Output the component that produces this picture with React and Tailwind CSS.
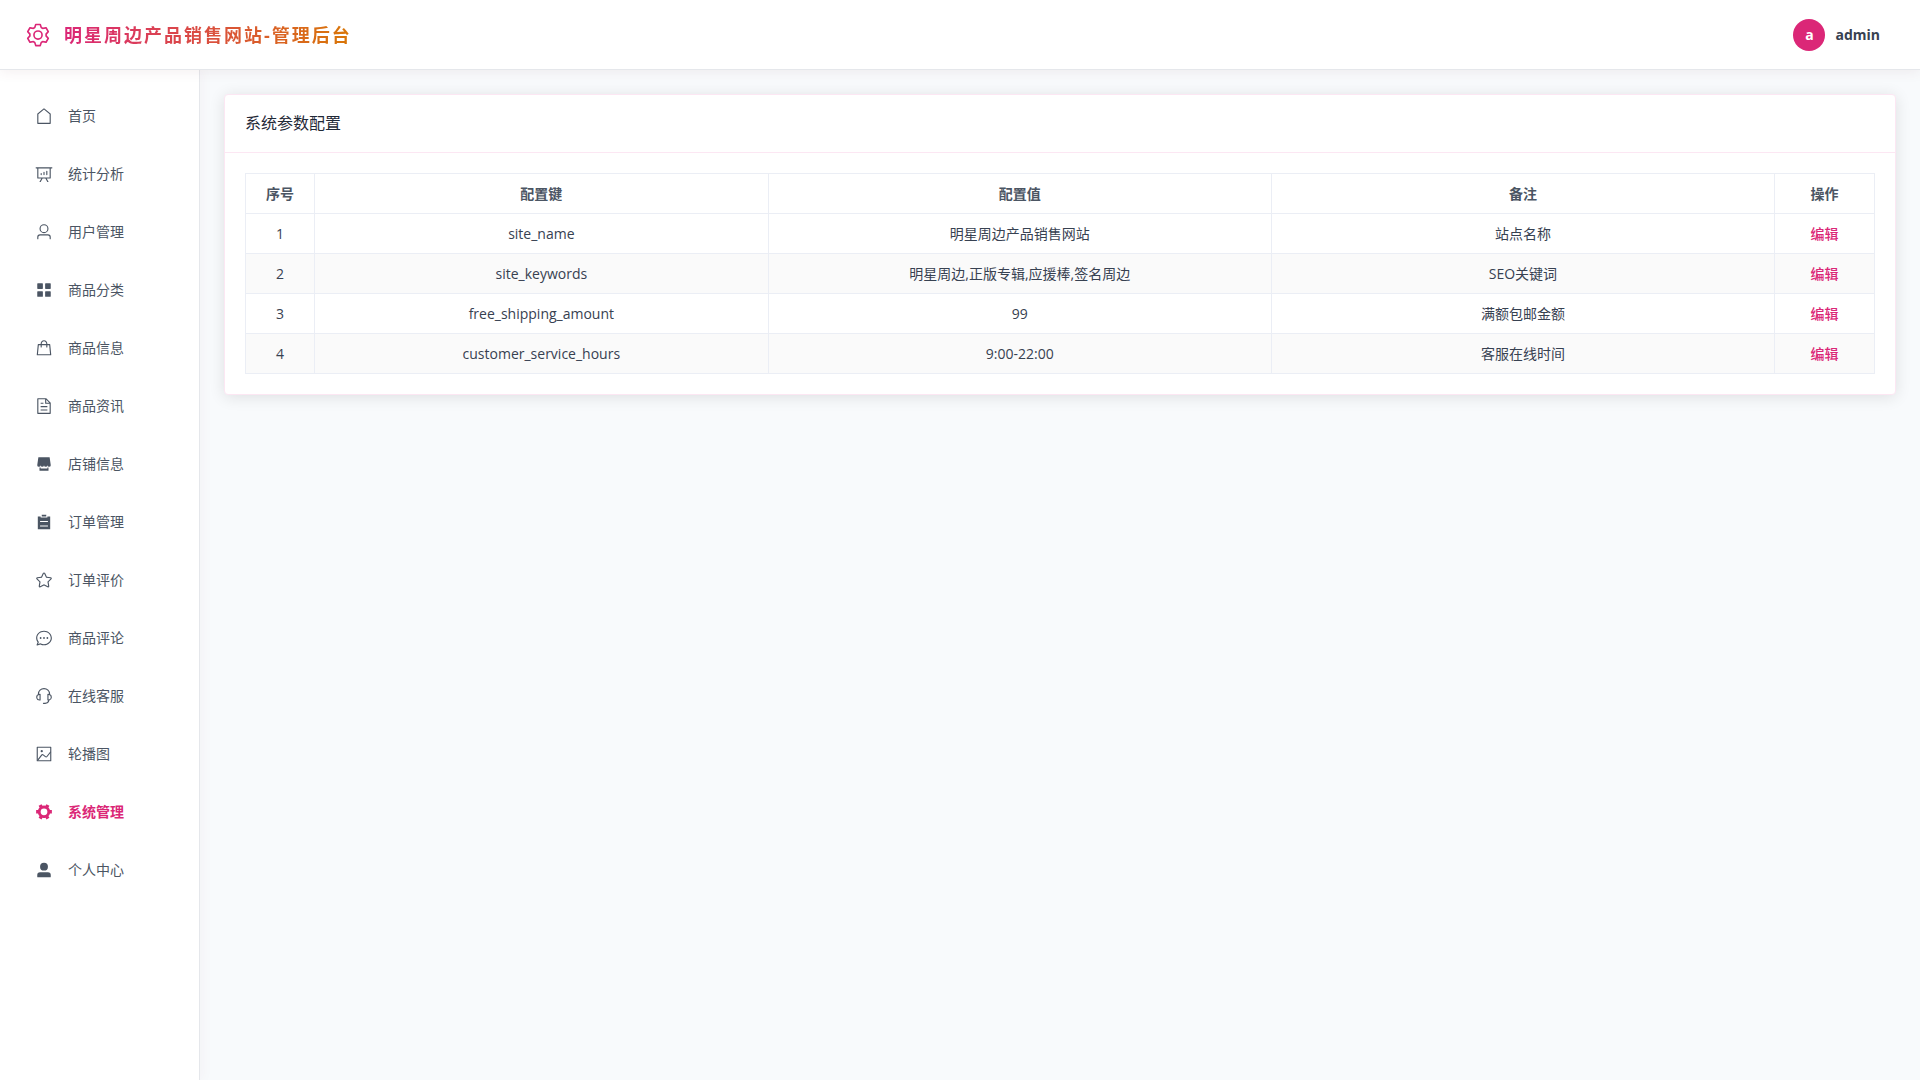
const ICONS = {
  house: ['M192 413.952V896h640V413.952L512 147.328zM139.52 374.4l352-293.312a32 32 0 0 1 40.96 0l352 293.312A32 32 0 0 1 896 398.976V928a32 32 0 0 1-32 32H160a32 32 0 0 1-32-32V398.976a32 32 0 0 1 11.52-24.576'],
  analysis: ['m665.216 768 110.848 192h-73.856L591.36 768H433.024L322.176 960H248.32l110.848-192H160a32 32 0 0 1-32-32V192H64a32 32 0 0 1 0-64h896a32 32 0 1 1 0 64h-64v544a32 32 0 0 1-32 32zM832 192H192v512h640zM352 448a32 32 0 0 1 32 32v64a32 32 0 0 1-64 0v-64a32 32 0 0 1 32-32m160-64a32 32 0 0 1 32 32v128a32 32 0 0 1-64 0V416a32 32 0 0 1 32-32m160-64a32 32 0 0 1 32 32v192a32 32 0 1 1-64 0V352a32 32 0 0 1 32-32'],
  user: ['M512 512a192 192 0 1 0 0-384 192 192 0 0 0 0 384m0 64a256 256 0 1 1 0-512 256 256 0 0 1 0 512m320 320v-96a96 96 0 0 0-96-96H288a96 96 0 0 0-96 96v96a32 32 0 1 1-64 0v-96a160 160 0 0 1 160-160h448a160 160 0 0 1 160 160v96a32 32 0 1 1-64 0'],
  menu: ['M160 448a32 32 0 0 1-32-32V160.064a32 32 0 0 1 32-32h256a32 32 0 0 1 32 32V416a32 32 0 0 1-32 32zm448 0a32 32 0 0 1-32-32V160.064a32 32 0 0 1 32-32h255.936a32 32 0 0 1 32 32V416a32 32 0 0 1-32 32zM160 896a32 32 0 0 1-32-32V608a32 32 0 0 1 32-32h256a32 32 0 0 1 32 32v256a32 32 0 0 1-32 32zm448 0a32 32 0 0 1-32-32V608a32 32 0 0 1 32-32h255.936a32 32 0 0 1 32 32v256a32 32 0 0 1-32 32z'],
  goods: ['M320 288v-22.336C320 154.688 405.504 64 512 64s192 90.688 192 201.664v22.4h131.072a32 32 0 0 1 31.808 28.8l57.6 576a32 32 0 0 1-31.808 35.2H131.328a32 32 0 0 1-31.808-35.2l57.6-576a32 32 0 0 1 31.808-28.8H320zm64 0h256v-22.336C640 189.248 582.272 128 512 128s-128 61.248-128 137.664v22.4zm-64 64H217.92l-51.2 512h690.56l-51.264-512H704v96a32 32 0 1 1-64 0v-96H384v96a32 32 0 0 1-64 0z'],
  document: ['M832 384H576V128H192v768h640zm-26.496-64L640 154.496V320zM160 64h480l256 256v608a32 32 0 0 1-32 32H160a32 32 0 0 1-32-32V96a32 32 0 0 1 32-32m160 448h384v64H320zm0-192h160v64H320zm0 384h384v64H320z'],
  shop: ['M704 704h64v192H256V704h64v64h384zm188.544-152.192C894.528 559.616 896 567.616 896 576a96 96 0 1 1-192 0 96 96 0 1 1-192 0 96 96 0 1 1-192 0 96 96 0 1 1-192 0c0-8.384 1.408-16.384 3.392-24.192L192 128h640z'],
  list: ['M704 192h160v736H160V192h160v64h384zM288 512h448v-64H288zm0 256h448v-64H288zm96-576V96h256v96z'],
  star: ['m512 747.84 228.16 119.936a6.4 6.4 0 0 0 9.28-6.72l-43.52-254.08 184.512-179.904a6.4 6.4 0 0 0-3.52-10.88l-255.104-37.12L517.76 147.904a6.4 6.4 0 0 0-11.52 0L392.192 379.072l-255.104 37.12a6.4 6.4 0 0 0-3.52 10.88L318.08 606.976l-43.584 254.08a6.4 6.4 0 0 0 9.28 6.72zM313.6 924.48a70.4 70.4 0 0 1-102.144-74.24l37.888-220.928L88.96 472.96A70.4 70.4 0 0 1 128 352.896l221.76-32.256 99.2-200.96a70.4 70.4 0 0 1 126.208 0l99.2 200.96 221.824 32.256a70.4 70.4 0 0 1 39.04 120.064L774.72 629.376l37.888 220.928a70.4 70.4 0 0 1-102.144 74.24L512 820.096l-198.4 104.32z'],
  chat: ['m174.72 855.68 135.296-45.12 23.68 11.84C388.096 849.536 448.576 864 512 864c211.84 0 384-166.784 384-352S723.84 160 512 160 128 326.784 128 512c0 69.12 24.96 139.264 70.848 199.232l22.08 28.8-46.272 115.584zm-45.248 82.56A32 32 0 0 1 89.6 896l58.368-145.92C94.72 680.32 64 596.864 64 512 64 299.904 256 96 512 96s448 203.904 448 416-192 416-448 416a461.056 461.056 0 0 1-206.912-48.384l-175.616 58.56z', 'M512 563.2a51.2 51.2 0 1 1 0-102.4 51.2 51.2 0 0 1 0 102.4m192 0a51.2 51.2 0 1 1 0-102.4 51.2 51.2 0 0 1 0 102.4m-384 0a51.2 51.2 0 1 1 0-102.4 51.2 51.2 0 0 1 0 102.4'],
  service: ['M864 409.6a192 192 0 0 1-37.888 349.44A256.064 256.064 0 0 1 576 960h-96a32 32 0 1 1 0-64h96a192.064 192.064 0 0 0 181.12-128H736a32 32 0 0 1-32-32V416a32 32 0 0 1 32-32h32c10.368 0 20.544.832 30.528 2.432a288 288 0 0 0-573.056 0A193.235 193.235 0 0 1 256 384h32a32 32 0 0 1 32 32v320a32 32 0 0 1-32 32h-32a192 192 0 0 1-96-358.4 352 352 0 0 1 704 0M256 448a128 128 0 1 0 0 256zm640 128a128 128 0 0 0-128-128v256a128 128 0 0 0 128-128'],
  picture: ['M160 160v704h704V160zm-32-64h768a32 32 0 0 1 32 32v768a32 32 0 0 1-32 32H128a32 32 0 0 1-32-32V128a32 32 0 0 1 32-32', 'M384 288q64 0 64 64t-64 64q-64 0-64-64t64-64M185.408 876.992l-50.816-38.912L350.72 556.032a96 96 0 0 1 134.592-17.856l1.856 1.472 122.88 99.136a32 32 0 0 0 44.992-4.864l216-269.888 49.92 39.936-215.808 269.824-.256.32a96 96 0 0 1-135.04 14.464l-122.88-99.072-.64-.512a32 32 0 0 0-44.8 5.952z'],
  tools: ['M764.416 254.72a351.68 351.68 0 0 1 86.336 149.184H960v192.064H850.752a351.68 351.68 0 0 1-86.336 149.312l54.72 94.72-166.272 96-54.592-94.72a352.64 352.64 0 0 1-172.48 0L371.136 936l-166.272-96 54.72-94.72a351.68 351.68 0 0 1-86.336-149.312H64v-192h109.248a351.68 351.68 0 0 1 86.336-149.312L204.8 160l166.208-96h.192l54.656 94.592a352.64 352.64 0 0 1 172.48 0L652.8 64h.128L819.2 160l-54.72 94.72zM704 499.968a192 192 0 1 0-384 0 192 192 0 0 0 384 0'],
  userFilled: ['M288 320a224 224 0 1 0 448 0 224 224 0 1 0-448 0m544 608H160a32 32 0 0 1-32-32v-96a160 160 0 0 1 160-160h448a160 160 0 0 1 160 160v96a32 32 0 0 1-32 32z'],
  setting: ['M600.704 64a32 32 0 0 1 30.464 22.208l35.2 109.376c14.784 7.232 28.928 15.36 42.432 24.512l112.384-24.192a32 32 0 0 1 34.432 15.36L944.32 364.8a32 32 0 0 1-4.032 37.504l-77.12 85.12a357.12 357.12 0 0 1 0 49.024l77.12 85.248a32 32 0 0 1 4.032 37.504l-88.704 153.6a32 32 0 0 1-34.432 15.296L708.8 803.904c-13.44 9.088-27.648 17.28-42.368 24.512l-35.264 109.376A32 32 0 0 1 600.704 960H423.296a32 32 0 0 1-30.464-22.208L357.696 828.48a351.616 351.616 0 0 1-42.56-24.64l-112.32 24.256a32 32 0 0 1-34.432-15.36L79.68 659.2a32 32 0 0 1 4.032-37.504l77.12-85.248a357.12 357.12 0 0 1 0-48.896l-77.12-85.248A32 32 0 0 1 79.68 364.8l88.704-153.6a32 32 0 0 1 34.432-15.296l112.32 24.256c13.568-9.152 27.776-17.408 42.56-24.64l35.2-109.312A32 32 0 0 1 423.232 64H600.64zm-23.424 64H446.72l-36.352 113.088-24.512 11.968a294.113 294.113 0 0 0-34.816 20.096l-22.656 15.36-116.224-25.088-65.28 113.152 79.68 88.192-1.92 27.136a293.12 293.12 0 0 0 0 40.192l1.92 27.136-79.808 88.192 65.344 113.152 116.224-25.024 22.656 15.296a294.113 294.113 0 0 0 34.816 20.096l24.512 11.968L446.72 896h130.688l36.48-113.152 24.448-11.904a288.282 288.282 0 0 0 34.752-20.096l22.592-15.296 116.288 25.024 65.28-113.152-79.744-88.192 1.92-27.136a293.12 293.12 0 0 0 0-40.256l-1.92-27.136 79.808-88.128-65.344-113.152-116.288 24.96-22.592-15.232a287.616 287.616 0 0 0-34.752-20.096l-24.448-11.904L577.344 128zM512 320a192 192 0 1 1 0 384 192 192 0 0 1 0-384m0 64a128 128 0 1 0 0 256 128 128 0 0 0 0-256'],
};

function Icon({ name, className }) {
  return (
    <svg viewBox="0 0 1024 1024" fill="currentColor" aria-hidden="true" className={className}>
      {ICONS[name].map((d) => (
        <path key={d} d={d} />
      ))}
    </svg>
  );
}

const NAV = [
  ['house', '首页'],
  ['analysis', '统计分析'],
  ['user', '用户管理'],
  ['menu', '商品分类'],
  ['goods', '商品信息'],
  ['document', '商品资讯'],
  ['shop', '店铺信息'],
  ['list', '订单管理'],
  ['star', '订单评价'],
  ['chat', '商品评论'],
  ['service', '在线客服'],
  ['picture', '轮播图'],
  ['tools', '系统管理'],
  ['userFilled', '个人中心'],
];

const ROWS = [
  ['site_name', '明星周边产品销售网站', '站点名称'],
  ['site_keywords', '明星周边,正版专辑,应援棒,签名周边', 'SEO关键词'],
  ['free_shipping_amount', '99', '满额包邮金额'],
  ['customer_service_hours', '9:00-22:00', '客服在线时间'],
];

function Header() {
  return (
    <header className="relative z-10 flex h-[70px] items-center justify-between border-b border-gray-200 bg-white pr-10 pl-[25px] shadow-[0_2px_12px_rgba(120,50,70,0.08)]">
      <div className="flex items-center gap-[13px]">
        <Icon name="setting" className="size-[26px] text-[#db2777]" />
        <h1 className="bg-linear-to-r/srgb from-[#db2777] to-[#d97706] bg-clip-text text-lg font-bold tracking-[2px] text-transparent">
          明星周边产品销售网站-管理后台
        </h1>
      </div>
      <button type="button" className="flex items-center gap-2.5">
        <span className="flex size-8 items-center justify-center rounded-full bg-[#db2777] text-sm font-bold text-white">a</span>
        <span className="text-sm font-bold text-[#374151]">admin</span>
      </button>
    </header>
  );
}

function Sidebar() {
  return (
    <nav className="w-[200px] shrink-0 border-r border-gray-200 bg-white px-3 py-[17px] shadow-[2px_0_12px_rgba(120,50,70,0.04)]">
      <ul>
        {NAV.map(([icon, label]) => {
          const active = label === '系统管理';
          return (
            <li key={label} className="py-1">
              <a
                href="#"
                aria-current={active ? 'page' : undefined}
                className={
                  active
                    ? 'flex h-[50px] items-center gap-[15px] pl-[23px] text-sm font-semibold text-[#db2777]'
                    : 'flex h-[50px] items-center gap-[15px] pl-[23px] text-sm text-[#4b5563]'
                }
              >
                <Icon name={icon} className="size-[18px]" />
                {label}
              </a>
            </li>
          );
        })}
      </ul>
    </nav>
  );
}

const CELL = 'h-10 border border-[#ebeef5] px-3 text-center';

function ConfigTable() {
  return (
    <table className="w-full table-fixed border-collapse text-sm leading-[23px] text-[#374151]">
      <colgroup>
        <col className="w-[69px]" />
        <col className="w-[27.85%]" />
        <col />
        <col />
        <col className="w-[100px]" />
      </colgroup>
      <thead className="text-[#4b5563]">
        <tr>
          {['序号', '配置键', '配置值', '备注', '操作'].map((h) => (
            <th key={h} scope="col" className={CELL}>{h}</th>
          ))}
        </tr>
      </thead>
      <tbody>
        {ROWS.map(([key, value, note], i) => (
          <tr key={key} className="even:bg-[#fafafa]">
            <td className={CELL}>{i + 1}</td>
            <td className={CELL}>{key}</td>
            <td className={CELL}>{value}</td>
            <td className={CELL}>{note}</td>
            <td className={CELL}>
              <button type="button" className="font-medium text-[#db2777]">编辑</button>
            </td>
          </tr>
        ))}
      </tbody>
    </table>
  );
}

export default function App() {
  return (
    <div className="flex min-h-screen flex-col bg-[#f9fafb] font-['Open_Sans','Noto_Sans_CJK_SC',sans-serif]">
      <Header />
      <div className="flex flex-1 bg-slate-50">
        <Sidebar />
        <main className="min-w-0 flex-1 p-6">
          <section className="rounded-sm border border-[#fce7f3] bg-white shadow-[0_2px_16px_rgba(0,0,0,0.11)]">
            <h2 className="border-b border-[#fce7f3] px-5 py-4 text-base leading-[25px] text-[#1f2937]">系统参数配置</h2>
            <div className="p-5">
              <ConfigTable />
            </div>
          </section>
        </main>
      </div>
    </div>
  );
}
